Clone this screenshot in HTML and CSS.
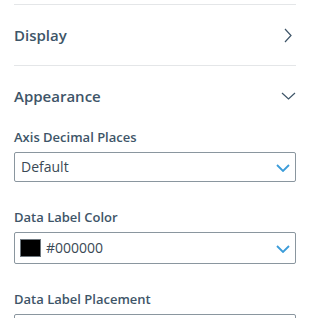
FILE: index.html
```html
<!DOCTYPE html>
<html lang="en">
<head>
    <meta charset="UTF-8">
    <meta name="viewport" content="width=device-width, initial-scale=1.0">
    <title>Chart Settings</title>
    <link rel="stylesheet" href="styles.css">
</head>
<body>
    <div class="panel">
        <div class="section">
            <div class="section-head">
                <span class="section-title">Display</span>
                <svg class="chev-right" width="8" height="15" viewBox="0 0 8 15">
                    <path d="M1 1 L7 7.5 L1 14" fill="none" stroke="#3e5568" stroke-width="1.2"/>
                </svg>
            </div>
        </div>

        <div class="section">
            <div class="section-head">
                <span class="section-title">Appearance</span>
                <svg class="chev-down" width="15" height="8" viewBox="0 0 15 8">
                    <path d="M1 1 L7.5 7 L14 1" fill="none" stroke="#3e5568" stroke-width="1.2"/>
                </svg>
            </div>

            <div class="field">
                <label class="field-label">Axis Decimal Places</label>
                <div class="select">
                    <span class="select-value">Default</span>
                    <svg class="select-arrow" width="14" height="8" viewBox="0 0 14 8">
                        <path d="M1 1 L7 7 L13 1" fill="none" stroke="#3b9cd9" stroke-width="1.8"/>
                    </svg>
                </div>
            </div>

            <div class="field">
                <label class="field-label">Data Label Color</label>
                <div class="select select-color">
                    <span class="select-value">
                        <span class="swatch"></span>
                        #000000
                    </span>
                    <svg class="select-arrow" width="14" height="8" viewBox="0 0 14 8">
                        <path d="M1 1 L7 7 L13 1" fill="none" stroke="#3b9cd9" stroke-width="1.8"/>
                    </svg>
                </div>
            </div>

            <div class="field">
                <label class="field-label">Data Label Placement</label>
                <div class="select"></div>
            </div>
        </div>
    </div>
</body>
</html>
```

FILE: styles.css
```css
body {
    margin: 0;
    font-family: 'Open Sans', sans-serif;
    background-color: white;
    color: #3e5568;
    overflow: hidden;
}

.panel {
    padding: 4px 15px 0 14px;
}

.section {
    border-top: 1px solid #e4e6e8;
}

.section-head {
    height: 60px;
    display: flex;
    align-items: center;
    justify-content: space-between;
}

.section-title {
    font-size: 15px;
    font-weight: 600;
    line-height: 20px;
}

.chev-right {
    margin-right: 4px;
}

.field {
    margin-top: 2px;
    margin-bottom: 26px;
}

.field-label {
    display: block;
    font-size: 13px;
    font-weight: 600;
    line-height: 18px;
}

.select {
    margin-top: 6px;
    height: 30px;
    box-sizing: border-box;
    border: 1px solid #8a969f;
    border-radius: 2px;
    display: flex;
    align-items: center;
    justify-content: space-between;
    padding: 0 5px 0 6px;
}

.select-color {
    height: 32px;
    padding-left: 5px;
}

.select-value {
    display: flex;
    align-items: center;
    gap: 5px;
    font-size: 14px;
    line-height: 20px;
    color: #3a4955;
}

.swatch {
    width: 19px;
    height: 16px;
    background: black;
    border: 1px solid #6d767d;
}

.select-arrow {
    margin-top: 2px;
}
```
